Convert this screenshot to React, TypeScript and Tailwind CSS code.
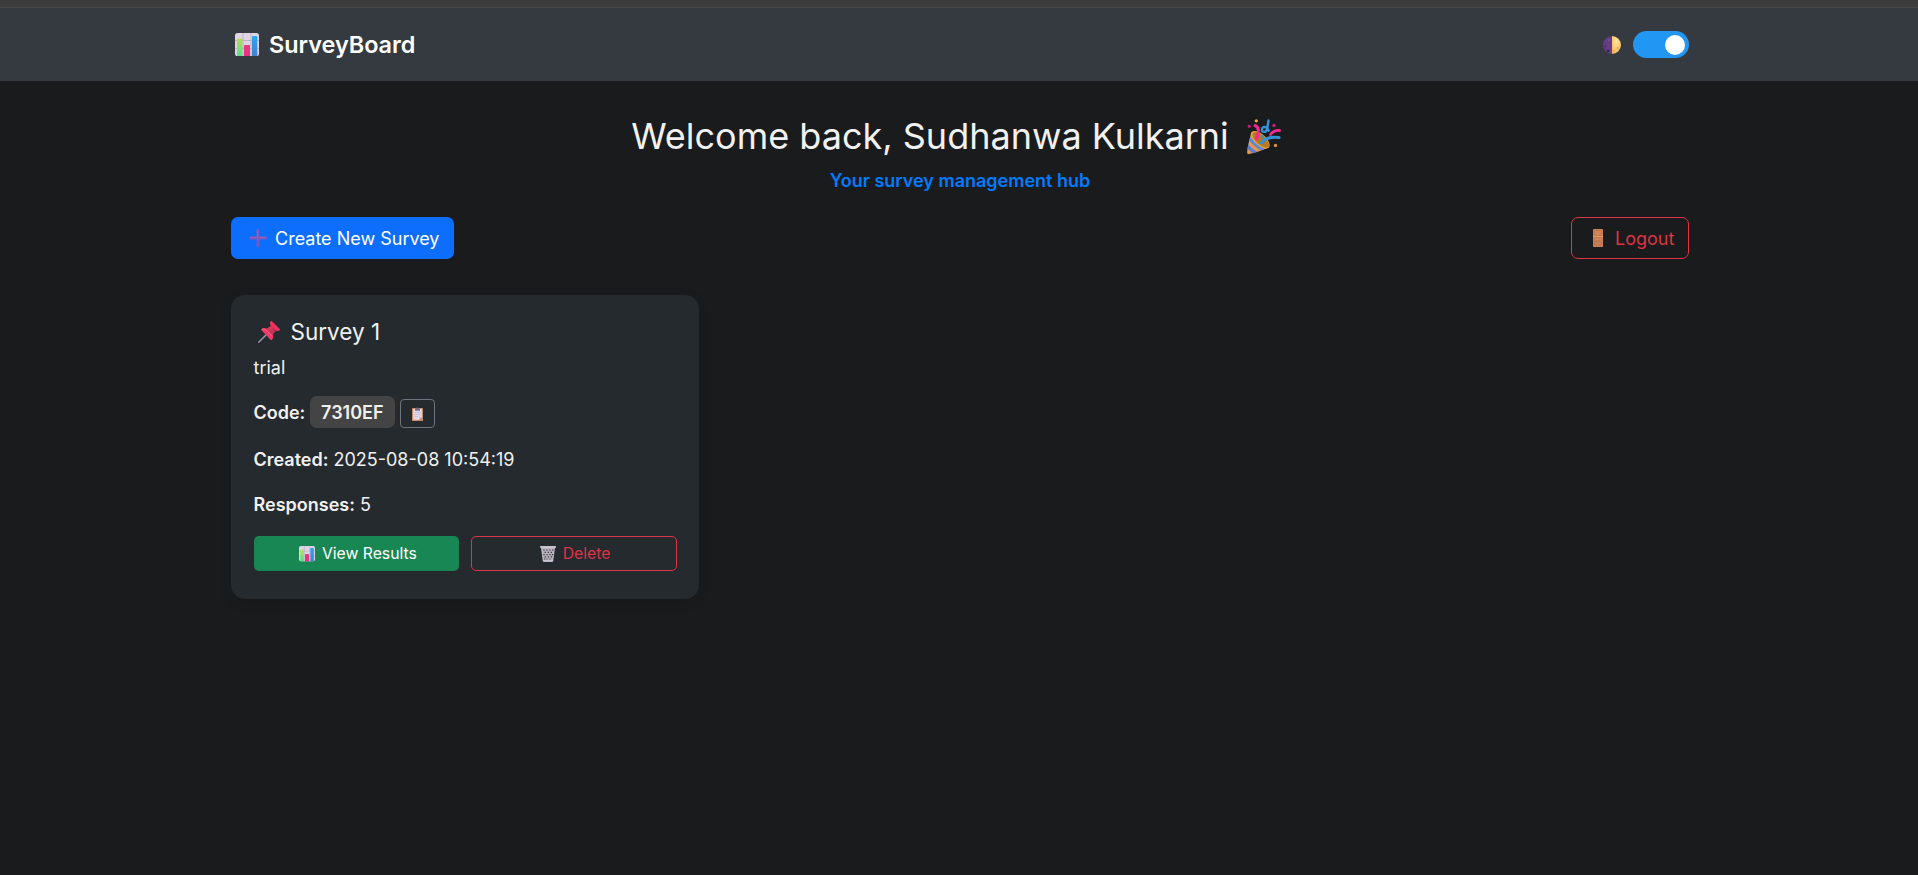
import type { ReactNode } from "react";

type IconProps = { className?: string };

function ChartIcon({ className }: IconProps) {
  return (
    <svg viewBox="0 0 24 24" className={className} aria-hidden="true">
      <defs>
        <linearGradient id="barGreen" x1="0" y1="0" x2="0" y2="1">
          <stop offset="0" stopColor="#b5e04a" />
          <stop offset="1" stopColor="#55e08c" />
        </linearGradient>
        <linearGradient id="barPink" x1="0" y1="0" x2="0" y2="1">
          <stop offset="0" stopColor="#e0407c" />
          <stop offset="1" stopColor="#ea2f80" />
        </linearGradient>
        <linearGradient id="barBlue" x1="0" y1="0" x2="0" y2="1">
          <stop offset="0" stopColor="#2ea5f5" />
          <stop offset="1" stopColor="#4680c8" />
        </linearGradient>
      </defs>
      <rect x="0" y="0" width="24" height="23" rx="2.6" fill="#ddd5e4" />
      <path d="M8 0v23M16 0v23M0 7.500h24M0 15.500h24" stroke="#b9aec4" strokeWidth="0.9" />
      <path d="M2 23V6.500a.8.8 0 0 1 .8-.8h3.700a.8.8 0 0 1 .8.8V23z" fill="url(#barGreen)" />
      <path d="M9 23V12.700a.8.8 0 0 1 .8-.8h4.400a.8.8 0 0 1 .8.8V23z" fill="url(#barPink)" />
      <path d="M17 23V3.700a.8.8 0 0 1 .8-.8h3.700a.8.8 0 0 1 .8.8V23z" fill="url(#barBlue)" />
    </svg>
  );
}

function MoonIcon({ className }: IconProps) {
  return (
    <svg viewBox="0 0 18 18" className={className} aria-hidden="true">
      <defs>
        <radialGradient id="moonLight" cx="0.5" cy="0.3" r="0.8">
          <stop offset="0" stopColor="#ffe79c" />
          <stop offset="1" stopColor="#f3ae55" />
        </radialGradient>
      </defs>
      <path d="M9 0a9 9 0 0 0 0 18z" fill="#643c86" />
      <path d="M9 0a9 9 0 0 1 0 18z" fill="url(#moonLight)" />
      <circle cx="5" cy="15" r="1.300" fill="#35203f" />
      <circle cx="2" cy="10.500" r="1" fill="#4b2b61" />
      <circle cx="6" cy="4" r="1.300" fill="#75499b" />
      <circle cx="14.500" cy="12" r="1" fill="#e69c4c" />
      <circle cx="11" cy="14.500" r=".8" fill="#e8a04c" />
    </svg>
  );
}

function PartyIcon({ className }: IconProps) {
  return (
    <svg viewBox="0 0 36 36" className={className} fill="none" aria-hidden="true">
      <defs>
        <clipPath id="cone">
          <path d="M4.500 13.500C2 22 .3 29 .2 33.800c0 1.200.8 1.600 2 1.300C9 33.500 16 31 21.500 28.500z" />
        </clipPath>
        <linearGradient id="coneFill" x1="0" y1="0" x2="1" y2="1">
          <stop offset="0" stopColor="#efb052" />
          <stop offset="1" stopColor="#d8804b" />
        </linearGradient>
      </defs>
      <g clipPath="url(#cone)">
        <rect width="36" height="36" fill="url(#coneFill)" />
        <path d="M2 19c4 5 9 9 15 12.500" stroke="#5a86de" strokeWidth="3.400" />
        <path d="M-1 25.500c3 4 7 7 11 9.500" stroke="#5a7ed8" strokeWidth="3.400" />
      </g>
      <ellipse cx="13.200" cy="20.800" rx="11.600" ry="5.800" transform="rotate(42 13.200 20.800)" fill="#e0a13a" />
      <ellipse cx="13.800" cy="20.800" rx="10.200" ry="4.600" transform="rotate(42 13.800 20.800)" fill="#b8781f" />
      <path d="M8 6.500c4 1.500 4.500 7 1.500 13.500" stroke="#f32890" strokeWidth="3" strokeLinecap="round" />
      <path d="M14.500 24c3.500-5 9-6.500 17.500-5.500" stroke="#3192d8" strokeWidth="3.200" strokeLinecap="round" />
      <path d="M23.500 15.500c2.500-3.500 5.500-4.500 9-4" stroke="#f32890" strokeWidth="2.800" strokeLinecap="round" />
      <path d="M21.500 1.500c-.5 4-.8 6.500-1.800 9.500-.9 2.600-5 2.500-4.800-.5.200-3.500 5-3.500 6.800 1.200" stroke="#3192d8" strokeWidth="2.400" strokeLinecap="round" />
      <circle cx="15.500" cy="17.300" r="1.600" fill="#3192d8" />
      <circle cx="9.300" cy="1.800" r="1.600" fill="#dfb03a" />
      <circle cx="2.200" cy="7.300" r="1.500" fill="#d41c86" />
      <circle cx="27" cy="6.500" r="1.700" fill="#c81d80" />
      <circle cx="28.500" cy="26.500" r="1.700" fill="#dc8e45" />
    </svg>
  );
}

function PlusIcon({ className }: IconProps) {
  return (
    <svg viewBox="0 0 18 18" className={className} aria-hidden="true">
      <rect x=".3" y="7.600" width="17.400" height="2.800" rx="1" fill="#7d59bd" />
      <rect x="7.600" y=".3" width="2.800" height="17.400" rx="1" fill="#7d59bd" />
      <path d="M8.400 1v7.400M1 8.300h7.400M10 8.300h7" stroke="#9a6ab5" strokeWidth=".8" />
    </svg>
  );
}

function DoorIcon({ className }: IconProps) {
  return (
    <svg viewBox="0 0 10 18" className={className} aria-hidden="true">
      <rect width="10" height="18" rx=".4" fill="#cb8059" />
      <rect x="1.500" y="1.500" width="7" height="4.800" fill="#d08557" stroke="#b56d4e" strokeWidth=".5" />
      <rect x="1.500" y="8.800" width="7" height="2.800" fill="#d08557" stroke="#b56d4e" strokeWidth=".5" />
      <rect x="1.500" y="13" width="7" height="3" fill="#c9805a" stroke="#b56d4e" strokeWidth=".5" />
      <path d="M0 7.500h10" stroke="#ef9b52" strokeWidth="1" />
    </svg>
  );
}

function PinIcon({ className }: IconProps) {
  return (
    <svg viewBox="0 0 22 22" className={className} aria-hidden="true">
      <path d="M.7 21.300 8.500 13.500" stroke="#9b93a5" strokeWidth="1.500" strokeLinecap="round" />
      <path d="M3.500 8c1.500-1.300 4-1.300 5.500-.2L14.500 13c1.200 1.700 1 4.300-.5 5.700-.5.500-1 .4-1.500 0L3.500 9.300c-.5-.5-.5-.9 0-1.300z" fill="#f4386a" />
      <path d="M8 8.300 13 4.500l5 5-4 5.500c-2.800-1-5-3.200-6-6.700z" fill="#c73355" />
      <path d="M9 8.300 13.500 5l1.800 1.800-4.500 4.700z" fill="#d8395d" />
      <path d="M12.700.4c.5-.5 1-.5 1.500 0l7.500 7.500c.5.500.5 1 0 1.400-1.200 1-2.500 1-3.700.2L12.500 4c-.9-1.300-.8-2.600.2-3.600z" fill="#f5305f" />
      <path d="M4.500 8.200c1.500-.4 2.800 0 4 1.200l5 5" stroke="#ff6184" strokeWidth="1.100" fill="none" strokeLinecap="round" />
    </svg>
  );
}

function ClipboardIcon({ className }: IconProps) {
  return (
    <svg viewBox="0 0 11 14" className={className} aria-hidden="true">
      <rect y="1" width="11" height="13" rx=".6" fill="#d08a62" />
      <path d="M1.200 2h8.600v8.200L7.300 12.800H1.200z" fill="#e2dcec" />
      <path d="M9.800 10.200 7.300 12.800v-2.600z" fill="#b7a9c6" />
      <path d="M2.300 5.500h6.400M2.300 7.500h6.400M2.300 9.500h4" stroke="#bdb2cc" strokeWidth=".6" />
      <path d="M3 1.500h1.200C4.400.2 6.600.2 6.800 1.500H8v2.300H3z" fill="#746b83" />
    </svg>
  );
}

function TrashIcon({ className }: IconProps) {
  return (
    <svg viewBox="0 0 16 16" className={className} aria-hidden="true">
      <path d="M1 2h14l-1.700 12.700c-.1.700-.5 1.100-1.200 1.100H3.900c-.7 0-1.100-.4-1.200-1.100z" fill="#b9b2bf" />
      <path
        d="M4 3.500v1.200M7 3.500v1.200M10 3.500v1.200M12.800 3.500v1.200M5.300 5.700v1.200M8.400 5.700v1.200M11.400 5.700v1.200M4 8v1.200M7 8v1.200M10 8v1.200M12.500 8v1.200M5.300 10.200v1.200M8.400 10.200v1.200M11.400 10.200v1.200M4.500 12.400v1M7 12.400v1M10 12.400v1"
        stroke="#38343f"
        strokeWidth="1.200"
      />
      <rect x="0" y="0" width="16" height="2" rx=".8" fill="#c9c2d0" />
      <rect x="3.200" y="13.900" width="9.600" height="1.800" rx=".6" fill="#c9c2d0" />
    </svg>
  );
}

function Field({ label, children }: { label: string; children: ReactNode }) {
  return (
    <p className="flex h-[27px] items-center gap-[5px]">
      <strong className="font-semibold">{label}</strong>
      {children}
    </p>
  );
}

export default function App() {
  return (
    <div className="flex min-h-[875px] flex-col bg-[#1a1b1c] font-['Inter',sans-serif] text-[18px] leading-[27px] text-[#f1f1f1]">
      <div className="h-[7px] bg-[#3c3c3c]" />
      <header className="flex h-[74px] border-t border-[#464849] bg-[#343a40]">
        <div className="mx-auto flex w-[1460px] items-center justify-between pl-[2px]">
          <a className="flex items-center pl-1 text-[23.4px] font-semibold text-white">
            <ChartIcon className="mr-[10px] size-6" />
            <span>SurveyBoard</span>
          </a>
          <div className="flex items-center gap-3">
            <MoonIcon className="size-[18px]" />
            <button className="flex h-[27px] w-14 items-center justify-end rounded-full bg-[#2196f3] pr-1" aria-label="Toggle theme">
              <span className="size-5 rounded-full bg-white" />
            </button>
          </div>
        </div>
      </header>

      <main className="mx-auto w-[1460px] pt-[34px] pl-[2px]">
        <div className="flex flex-col items-center">
          <h1 className="flex h-[43px] items-center pr-[6px] text-[36px]">
            <span>Welcome back, Sudhanwa Kulkarni</span>
            <PartyIcon className="ml-[18px] size-9" />
          </h1>
          <p className="mt-[9px] font-semibold text-[#007bff]">Your survey management hub</p>
        </div>

        <div className="mt-[23px] flex justify-between">
          <button className="flex h-[42px] w-[223px] items-center rounded-[7px] bg-[#0d6efd] pl-[18px] text-white">
            <PlusIcon className="mr-[8px] size-[18px]" />
            Create New Survey
          </button>
          <button className="flex h-[42px] w-[118px] items-center rounded-[7px] border border-[#dc3545] pl-[21px] text-[#dc3545]">
            <DoorIcon className="mr-[12px] h-[18px] w-[10px]" />
            Logout
          </button>
        </div>

        <section className="mt-9 h-[304px] w-[468px] rounded-[14px] bg-[#252a2e] px-[22.5px] pt-[23px] shadow-[0_4px_14px_rgba(0,0,0,0.08)]">
          <h2 className="flex h-[27px] items-center pl-1 text-[22.5px]">
            <PinIcon className="mr-[11px] size-[22px]" />
            Survey 1
          </h2>
          <p className="mt-[9px]">trial</p>
          <div className="mt-[15px] flex h-[33px] items-end">
            <strong className="pb-[3px] font-semibold">Code:</strong>
            <span className="ml-[4.5px] flex h-8 w-[85px] items-center justify-center self-start rounded-[7px] bg-[#444444] font-semibold">
              7310EF
            </span>
            <button className="mb-[1px] ml-[5px] flex h-[29px] w-[35px] items-center justify-center rounded-[4px] border border-[#6c757d]" aria-label="Copy code">
              <ClipboardIcon className="h-[14px] w-[11px]" />
            </button>
          </div>
          <div className="mt-[17px] flex flex-col gap-[18px]">
            <Field label="Created:">2025-08-08 10:54:19</Field>
            <Field label="Responses:">5</Field>
          </div>
          <div className="mt-[18px] flex gap-3 pl-[0.5px] text-[15.75px]">
            <button className="flex h-[35px] w-[205px] items-center justify-center gap-[7px] rounded-[5px] bg-[#198754] pl-[3px] text-white">
              <ChartIcon className="size-4" />
              View Results
            </button>
            <button className="flex h-[35px] w-[206px] items-center justify-center gap-[7px] rounded-[5px] border border-[#dc3545] pl-[3px] text-[#dc3545]">
              <TrashIcon className="size-4" />
              Delete
            </button>
          </div>
        </section>
      </main>
    </div>
  );
}
